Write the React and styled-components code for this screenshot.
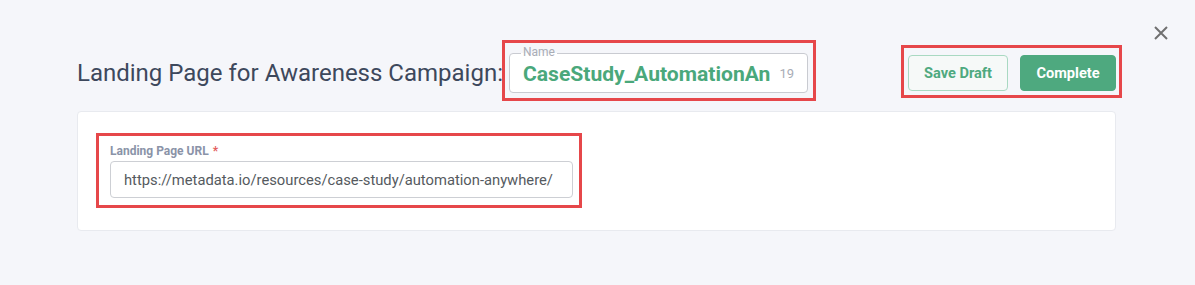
import React from "react";
import styled, { createGlobalStyle } from "styled-components";

const GlobalStyle = createGlobalStyle`
  html, body { margin: 0; padding: 0; }
  body {
    background: #f5f6fa;
    font-family: Roboto, "Liberation Sans", Arial, sans-serif;
  }
`;

const Page = styled.div`
  position: relative;
  width: 1195px;
  height: 285px;
  box-sizing: border-box;
  padding: 53px 79px 0 77px;
  background: #f5f6fa;
`;

const CloseButton = styled.button`
  position: absolute;
  top: 26px;
  right: 27px;
  width: 14px;
  height: 14px;
  padding: 0;
  border: none;
  background: transparent;
  cursor: pointer;
  display: flex;
`;

const Header = styled.div`
  display: flex;
  align-items: center;
  justify-content: space-between;
  height: 40px;
`;

const TitleGroup = styled.div`
  display: flex;
  align-items: center;
  gap: 6px;
`;

const Title = styled.h1`
  margin: 0;
  font-size: 24px;
  font-weight: 400;
  line-height: 40px;
  color: #3d485c;
  white-space: nowrap;
`;

const Highlight = styled.div`
  position: relative;
  &::after {
    content: "";
    position: absolute;
    pointer-events: none;
    top: ${(p) => p.$t}px;
    left: ${(p) => p.$l}px;
    right: ${(p) => p.$r}px;
    bottom: ${(p) => p.$b}px;
    border: 3px solid #e6474a;
  }
`;

const NameField = styled.div`
  position: relative;
  box-sizing: border-box;
  width: 299px;
  height: 40px;
  border: 1px solid #c9cbd1;
  border-radius: 4px;
  background: #fff;
  display: flex;
  align-items: center;
  padding: 0 8px 0 13px;
  gap: 9px;
`;

const Legend = styled.span`
  position: absolute;
  top: -9px;
  left: 11px;
  padding: 0 2px;
  font-size: 12px;
  line-height: 15px;
  color: #a9adb6;
  background: linear-gradient(to bottom, #f5f6fa 0 55%, #fff 55% 100%);
`;

const NameValue = styled.span`
  flex: none;
  font-size: 21.1px;
  font-weight: 700;
  color: #4aa87b;
  white-space: nowrap;
`;

const Counter = styled.span`
  font-size: 13px;
  color: #a9adb6;
`;

const Actions = styled.div`
  display: flex;
  gap: 12px;
`;

const Button = styled.button`
  box-sizing: border-box;
  height: 36px;
  width: ${(p) => p.$w}px;
  border-radius: 4px;
  font-family: inherit;
  font-size: 14.6px;
  font-weight: 700;
  cursor: pointer;
  border: 1px solid ${(p) => (p.$primary ? "#4ea97f" : "#a9d9c2")};
  background: ${(p) => (p.$primary ? "#4ea97f" : "#f6f9f8")};
  color: ${(p) => (p.$primary ? "#ffffff" : "#4ea97f")};
`;

const Card = styled.div`
  margin-top: 18px;
  box-sizing: border-box;
  height: 120px;
  background: #fff;
  border: 1px solid #e8eaef;
  border-radius: 4px;
  padding: 31px 32px 0;
`;

const FieldGroup = styled.div`
  width: 463px;
  display: flex;
  flex-direction: column;
  gap: 2px;
`;

const Label = styled.label`
  font-size: 12px;
  font-weight: 700;
  line-height: 16px;
  color: #8a93a8;
`;

const Required = styled.span`
  color: #e35d5d;
  margin-left: 4px;
`;

const UrlInput = styled.div`
  box-sizing: border-box;
  height: 37px;
  border: 1px solid #cdcfd4;
  border-radius: 4px;
  padding: 0 13px;
  display: flex;
  align-items: center;
  font-size: 14.75px;
  color: #555a60;
  white-space: nowrap;
`;

export default function App() {
  return (
    <>
      <GlobalStyle />
      <Page>
        <CloseButton aria-label="Close">
          <svg width="14" height="14" viewBox="0 0 14 14">
            <path d="M1 1L13 13M13 1L1 13" stroke="#707070" strokeWidth="2" />
          </svg>
        </CloseButton>
        <Header>
          <TitleGroup>
            <Title>Landing Page for Awareness Campaign:</Title>
            <Highlight $t={-13} $l={-7} $r={-8} $b={-8}>
              <NameField>
                <Legend>Name</Legend>
                <NameValue>CaseStudy_AutomationAn</NameValue>
                <Counter>19</Counter>
              </NameField>
            </Highlight>
          </TitleGroup>
          <Highlight $t={-10} $l={-7} $r={-6} $b={-7}>
            <Actions>
              <Button $w={100}>Save Draft</Button>
              <Button $w={96} $primary>Complete</Button>
            </Actions>
          </Highlight>
        </Header>
        <Card>
          <Highlight $t={-10} $l={-14} $r={-9} $b={-10} style={{ width: 463 }}>
            <FieldGroup>
              <Label>
                Landing Page URL<Required>*</Required>
              </Label>
              <UrlInput>https://metadata.io/resources/case-study/automation-anywhere/</UrlInput>
            </FieldGroup>
          </Highlight>
        </Card>
      </Page>
    </>
  );
}
